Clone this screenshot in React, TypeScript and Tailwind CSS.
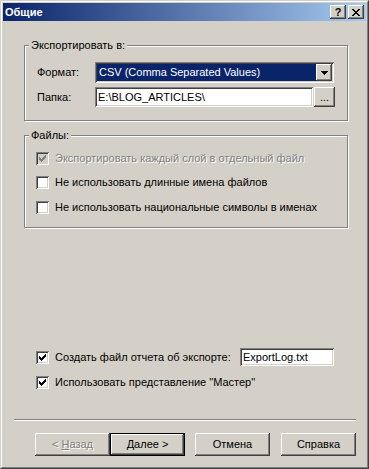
import { ReactNode } from "react";

const raised =
  "bg-[#d4d0c8] shadow-[inset_-1px_-1px_0_#404040,inset_1px_1px_0_#fff,inset_-2px_-2px_0_#808080,inset_2px_2px_0_#d4d0c8]";
const sunken =
  "bg-white shadow-[inset_1px_1px_0_#808080,inset_-1px_-1px_0_#fff,inset_2px_2px_0_#404040,inset_-2px_-2px_0_#d4d0c8]";

function Check({ color }: { color: string }) {
  // classic 7x7 pixel tick
  const cols = [2, 3, 4, 3, 2, 1, 0];
  return (
    <svg width="7" height="7" viewBox="0 0 7 7" shapeRendering="crispEdges">
      {cols.map((y, x) => (
        <rect key={x} x={x} y={y} width="1" height="3" fill={color} />
      ))}
    </svg>
  );
}

function CheckBox({ checked, disabled }: { checked?: boolean; disabled?: boolean }) {
  return (
    <div
      className={`w-[13px] h-[13px] shrink-0 flex items-center justify-center shadow-[inset_1px_1px_0_#808080,inset_-1px_-1px_0_#fff,inset_2px_2px_0_#404040,inset_-2px_-2px_0_#d4d0c8] ${
        disabled ? "bg-[#d4d0c8]" : "bg-white"
      }`}
    >
      {checked && <Check color={disabled ? "#808080" : "#000"} />}
    </div>
  );
}

function CheckRow({ label, checked, disabled }: { label: string; checked?: boolean; disabled?: boolean }) {
  return (
    <div className="flex items-center h-[13px] gap-[6px]">
      <CheckBox checked={checked} disabled={disabled} />
      <span
        className={`whitespace-nowrap leading-[13px] ${
          disabled ? "text-[#808080] [text-shadow:1px_1px_0_#fff]" : ""
        }`}
      >
        {label}
      </span>
    </div>
  );
}

function GroupBox({ title, className, children }: { title: string; className: string; children: ReactNode }) {
  return (
    <div
      className={`relative w-[324px] border border-[#808080] shadow-[inset_1px_1px_0_#fff,1px_1px_0_#fff] ${className}`}
    >
      <span className="absolute left-[4px] -top-[7px] px-[2px] bg-[#d4d0c8] leading-[13px] whitespace-nowrap">
        {title}
      </span>
      {children}
    </div>
  );
}

function Button({
  children,
  isDefault,
  disabled,
  className = "",
}: {
  children: ReactNode;
  isDefault?: boolean;
  disabled?: boolean;
  className?: string;
}) {
  const face = (
    <div
      className={`${raised} w-full h-full flex items-center justify-center leading-[13px] ${
        disabled ? "text-[#808080] [text-shadow:1px_1px_0_#fff]" : ""
      }`}
    >
      {children}
    </div>
  );
  return (
    <div className={`w-[75px] h-[23px] shrink-0 ${isDefault ? "border border-black" : ""} ${className}`}>
      {face}
    </div>
  );
}

function TitleBar() {
  const x = [
    [0, 1, 6, 7],
    [1, 2, 5, 6],
    [2, 3, 4, 5],
    [3, 4],
    [2, 3, 4, 5],
    [1, 2, 5, 6],
    [0, 1, 6, 7],
  ];
  return (
    <div className="h-[18px] shrink-0 flex items-center bg-[linear-gradient(to_right,#0a246a,#a6caf0)] pl-[2px] pr-[2px]">
      <span className="text-white font-bold text-[11px] leading-[13px]">Общие</span>
      <div className="ml-auto flex gap-[2px]">
        <div className={`${raised} w-[16px] h-[14px] flex items-center justify-center font-bold text-[11px] leading-[11px]`}>
          ?
        </div>
        <div className={`${raised} w-[16px] h-[14px] flex items-center justify-center`}>
          <svg width="8" height="7" viewBox="0 0 8 7" shapeRendering="crispEdges" className="mr-px">
            {x.map((row, y) =>
              row.map((px) => <rect key={`${y}-${px}`} x={px} y={y} width="1" height="1" fill="#000" />)
            )}
          </svg>
        </div>
      </div>
    </div>
  );
}

export default function App() {
  return (
    <div className="w-[369px] h-[469px] bg-[#d4d0c8] border border-t-[#d4d0c8] border-l-[#d4d0c8] border-r-[#404040] border-b-[#404040] font-['Liberation_Sans',Arial,sans-serif] text-[11px] text-black">
      <div className="h-full border border-t-white border-l-white border-r-[#808080] border-b-[#808080] p-px flex flex-col">
        <TitleBar />

        <div className="flex flex-col pl-[21px]">
          <GroupBox title="Экспортировать в:" className="mt-[24px] h-[76px]">
            <div className="pl-[12px] pt-[16px] flex flex-col gap-[4px]">
              <div className="flex items-center">
                <span className="w-[58px]">Формат:</span>
                <div className={`${sunken} w-[239px] h-[21px] p-[2px] flex`}>
                  <div className="flex-1 bg-[#0a246a] text-white flex items-center pl-[2px] leading-[13px] whitespace-nowrap">
                    CSV (Comma Separated Values)
                  </div>
                  <div className={`${raised} w-[16px] h-[17px] flex items-center justify-center`}>
                    <svg width="7" height="4" viewBox="0 0 7 4" shapeRendering="crispEdges">
                      <rect x="0" y="0" width="7" height="1" fill="#000" />
                      <rect x="1" y="1" width="5" height="1" fill="#000" />
                      <rect x="2" y="2" width="3" height="1" fill="#000" />
                      <rect x="3" y="3" width="1" height="1" fill="#000" />
                    </svg>
                  </div>
                </div>
              </div>
              <div className="flex items-center">
                <span className="w-[58px]">Папка:</span>
                <div className={`${sunken} w-[218px] h-[20px] flex items-center pl-[3px] leading-[13px]`}>
                  E:\BLOG_ARTICLES\
                </div>
                <div className={`${raised} ml-[1px] w-[21px] h-[20px] flex items-center justify-center leading-[13px]`}>
                  ...
                </div>
              </div>
            </div>
          </GroupBox>

          <GroupBox title="Файлы:" className="mt-[14px] h-[93px]">
            <div className="pl-[11px] pt-[16px] flex flex-col">
              <CheckRow label="Экспортировать каждый слой в отдельный файл" checked disabled />
              <div className="mt-[11px]">
                <CheckRow label="Не использовать длинные имена файлов" />
              </div>
              <div className="mt-[12px]">
                <CheckRow label="Не использовать национальные символы в именах" />
              </div>
            </div>
          </GroupBox>

          <div className="mt-[120px] ml-[12px] h-[18px] flex items-center">
            <CheckBox checked />
            <span className="ml-[6px] w-[185px] whitespace-nowrap leading-[13px]">Создать файл отчета об экспорте:</span>
            <div className={`${sunken} w-[94px] h-[18px] flex items-center pl-[3px] leading-[13px]`}>ExportLog.txt</div>
          </div>
          <div className="mt-[10px] ml-[12px]">
            <CheckRow label={'Использовать представление "Мастер"'} checked />
          </div>

          <div className="mt-[30px] -ml-[10px] w-[342px] h-[2px] border-t border-t-[#808080] border-b border-b-white" />

          <div className="mt-[12px] ml-[11px] flex">
            <Button disabled>
              &lt; <span className="underline ml-[3px]">Н</span>азад
            </Button>
            <Button isDefault>
              <span className="underline">Д</span>алее &gt;
            </Button>
            <Button className="ml-[10px]">Отмена</Button>
            <Button className="ml-[11px]">Справка</Button>
          </div>
        </div>
      </div>
    </div>
  );
}
